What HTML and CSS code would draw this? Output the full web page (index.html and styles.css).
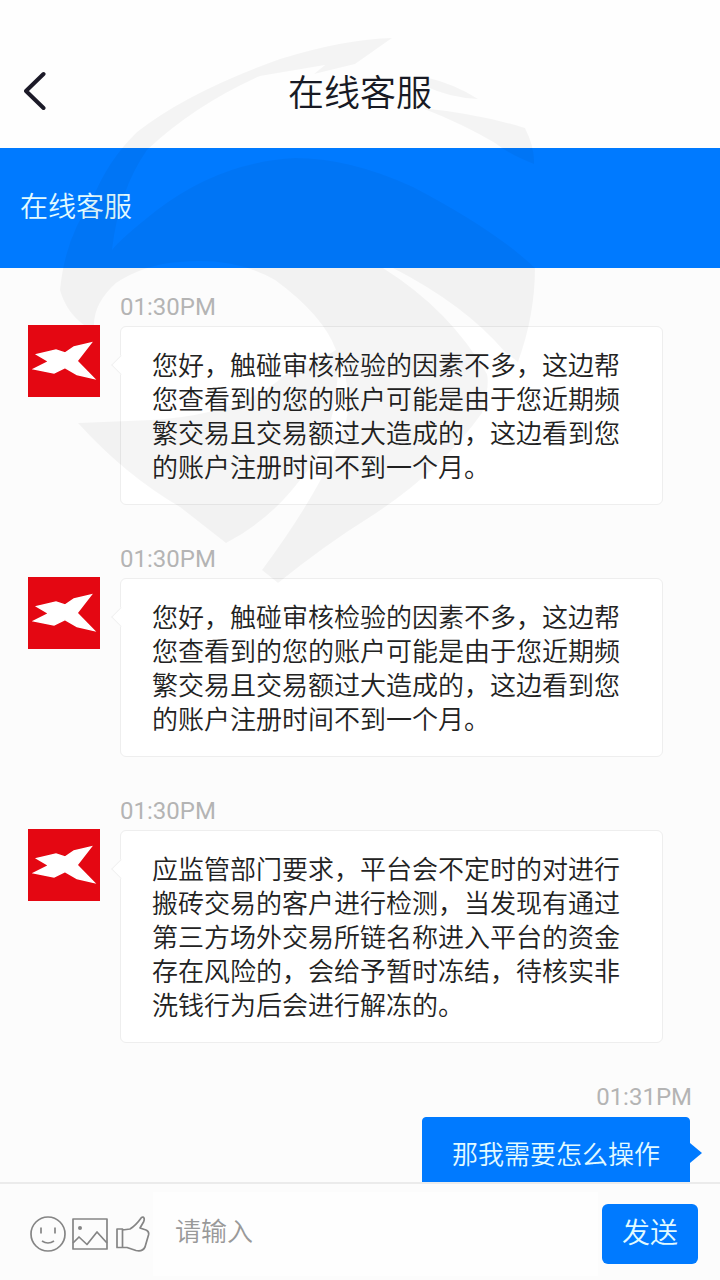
FILE: index.html
```html
<!DOCTYPE html>
<html lang="zh-CN">
<head>
  <meta charset="UTF-8" />
  <meta name="viewport" content="width=device-width, initial-scale=1.0" />
  <title>在线客服</title>
  <link rel="stylesheet" href="styles.css">
</head>
<body>
  <svg class="symbols">
    <symbol id="logo" viewBox="0 0 72 72">
      <rect width="72" height="72" fill="#e40712"/>
      <path d="M9 29.500 L28 25 L37 28 L46 22 L63 18 L49 36 L66 53.500 L49 49.500 L37 42.500 L26 48 L6 44 L21 36.500 Z" fill="#fff" stroke="#fff" stroke-width="1.5"/>
    </symbol>
  </svg>

  <div class="topbar">
    <svg class="back" viewBox="0 0 24 40">
      <path d="M19.500 3 L2 20 L19.500 37"/>
    </svg>
    <h1>在线客服</h1>
  </div>

  <div class="banner">在线客服</div>

  <div class="messages">
    <div class="message">
      <svg class="avatar"><use href="#logo"/></svg>
      <div class="content">
        <div class="time">01:30PM</div>
        <div class="bubble">您好，触碰审核检验的因素不多，这边帮您查看到的您的账户可能是由于您近期频繁交易且交易额过大造成的，这边看到您的账户注册时间不到一个月。</div>
      </div>
    </div>
    <div class="message">
      <svg class="avatar"><use href="#logo"/></svg>
      <div class="content">
        <div class="time">01:30PM</div>
        <div class="bubble">您好，触碰审核检验的因素不多，这边帮您查看到的您的账户可能是由于您近期频繁交易且交易额过大造成的，这边看到您的账户注册时间不到一个月。</div>
      </div>
    </div>
    <div class="message">
      <svg class="avatar"><use href="#logo"/></svg>
      <div class="content">
        <div class="time">01:30PM</div>
        <div class="bubble">应监管部门要求，平台会不定时的对进行搬砖交易的客户进行检测，当发现有通过第三方场外交易所链名称进入平台的资金存在风险的，会给予暂时冻结，待核实非洗钱行为后会进行解冻的。</div>
      </div>
    </div>
    <div class="message mine">
      <div class="content">
        <div class="time">01:31PM</div>
        <div class="bubble">那我需要怎么操作</div>
      </div>
    </div>
  </div>

  <div class="input-bar">
    <div class="tools">
      <svg viewBox="0 0 36 36">
        <circle cx="18" cy="18" r="17"/>
        <path d="M11 11.5 V17.5 M25 11.5 V17.5 M12 25 Q18 29 24 25"/>
      </svg>
      <svg viewBox="0 0 36 36">
        <rect x="1" y="3" width="34" height="30"/>
        <circle class="dot" cx="8" cy="12" r="2"/>
        <path d="M1 27 L7 21 L15 28.500 L25 16 L35 27"/>
      </svg>
      <svg viewBox="0 0 36 36">
        <path d="M3 13 H8.500 V31.500 H3 Z M8.500 14 L16 13 C21 10 25 5 27.500 1.500 C30 0 31 3 29.500 6 L26 12 L32 14 C34.500 15 35 17 34.500 19 L31 31 C29 35 26 35.500 22 34.500 L13 31.500 H8.500"/>
      </svg>
    </div>
    <input class="text-input" type="text" placeholder="请输入">
    <button class="send">发送</button>
  </div>

  <svg class="watermark" viewBox="0 0 720 1280">
    <path d="M392 38 Q345 39 280 59 Q188 92 137 132 Q108 160 92 200 Q65 238 60 290 Q66 312 84 325 L94 325 Q94 303 116 283 Q145 264 180 262 Q235 257 275 280 Q323 315 336 350 Q310 366 285 375 Q240 415 151 420 L78 423 Q125 475 180 507 L226 543 Q270 520 300 480 Q340 435 338 352 Q354 395 345 425 Q325 485 262 570 L278 583 Q325 545 370 517 Q440 472 482 413 Q490 385 487 374 Q450 310 383 268 L393 268 Q465 305 505 352 L518 362 Q535 315 535 268 Q495 230 413 187 Q350 158 295 158 Q220 162 157 210 Q119 240 112 250 Q119 190 147 150 Q195 105 260 76 L325 65 L314 74 L355 64 Z"/>
    <path d="M422 108 Q480 114 525 128 Q535 148 534 164 Q510 155 495 143 Q465 125 422 108 Z"/>
    <path d="M425 77 Q455 84 478 99 Q450 98 425 86 Z"/>
  </svg>
</body>
</html>
```
FILE: styles.css
```css
* { box-sizing: border-box; }
body {
  margin: 0;
  height: 100vh;
  display: flex;
  flex-direction: column;
  overflow: hidden;
  background-color: #fcfcfc;
  color: #222;
  font-family: Roboto, "Noto Sans CJK SC", sans-serif;
  font-weight: 350;
}
.symbols {
  display: none;
}
.topbar {
  height: 148px;
  flex: none;
  padding: 38px 24px 0;
  display: grid;
  grid-template-columns: 24px 1fr 24px;
  align-items: center;
  background-color: #fefefe;
}
.topbar h1 {
  margin: -6px 0 0;
  font-size: 36px;
  font-weight: 350;
  text-align: center;
  color: #181a24;
}
.back {
  width: 24px;
  height: 40px;
  margin-top: -5px;
  fill: none;
  stroke: #1c1a28;
  stroke-width: 4;
  stroke-linecap: round;
  stroke-linejoin: round;
}
.banner {
  height: 120px;
  flex: none;
  padding: 0 20px 6px;
  display: flex;
  align-items: center;
  background-color: #007aff;
  color: #e2faff;
  font-size: 28px;
}
.messages {
  flex: 1;
  min-height: 0;
  overflow: hidden;
  padding: 25px 30px 0 28px;
}
.message {
  display: flex;
  gap: 20px;
  margin-bottom: 40px;
}
.avatar {
  width: 72px;
  height: 72px;
  flex: none;
  margin-top: 32px;
}
.content {
  display: flex;
  flex-direction: column;
}
.time {
  height: 33px;
  line-height: 29px;
  font-size: 24px;
  font-weight: 400;
  color: #b4b4b4;
}
.bubble {
  position: relative;
  width: 543px;
  padding: 22px 31px 19px;
  border: 1px solid #eee;
  border-radius: 6px;
  background-color: #fff;
  font-size: 26px;
  line-height: 34px;
}
.bubble::before {
  content: "";
  position: absolute;
  left: -7px;
  top: 31px;
  width: 13px;
  height: 13px;
  background-color: #fff;
  border-left: 1px solid #f1f1f1;
  border-bottom: 1px solid #f1f1f1;
  transform: rotate(45deg);
}
.mine {
  justify-content: flex-end;
}
.mine .content {
  align-items: flex-end;
}
.mine .time {
  height: 34px;
  margin-right: -2px;
}
.mine .bubble {
  width: 268px;
  padding: 20px 29px;
  border-color: #007aff;
  border-radius: 4px;
  background-color: #007aff;
  color: #e2faff;
}
.mine .bubble::before {
  left: auto;
  right: -13px;
  top: 25px;
  width: 0;
  height: 0;
  background: none;
  border: solid transparent;
  border-width: 10px 0 10px 12px;
  border-left-color: #007aff;
  transform: none;
}
.input-bar {
  height: 98px;
  flex: none;
  display: flex;
  align-items: center;
  padding: 4px 22px 0 30px;
  border-top: 2px solid #ebebeb;
  background-color: #fcfcfc;
}
.tools {
  display: flex;
  gap: 6px;
  width: 123px;
}
.tools svg {
  width: 36px;
  height: 36px;
  flex: none;
  fill: none;
  stroke: #858585;
  stroke-width: 1.7;
  stroke-linejoin: round;
}
.tools .dot {
  fill: #858585;
  stroke: none;
}
.text-input {
  flex: 1;
  min-width: 0;
  height: 84px;
  padding: 0 22px 5px;
  border: none;
  outline: none;
  background-color: #fefefe;
  font: inherit;
  font-size: 26px;
}
.text-input::placeholder {
  color: #999;
}
.send {
  width: 96px;
  height: 60px;
  margin-left: 4px;
  padding: 0 0 6px;
  border: none;
  border-radius: 6px;
  background-color: #007aff;
  color: #e2faff;
  font: inherit;
  font-size: 28px;
}
/* logo laid over the whole page */
.watermark {
  position: fixed;
  top: 0;
  left: 0;
  width: 720px;
  height: 1280px;
  fill: rgba(0, 0, 0, 0.04);
  pointer-events: none;
}
```
